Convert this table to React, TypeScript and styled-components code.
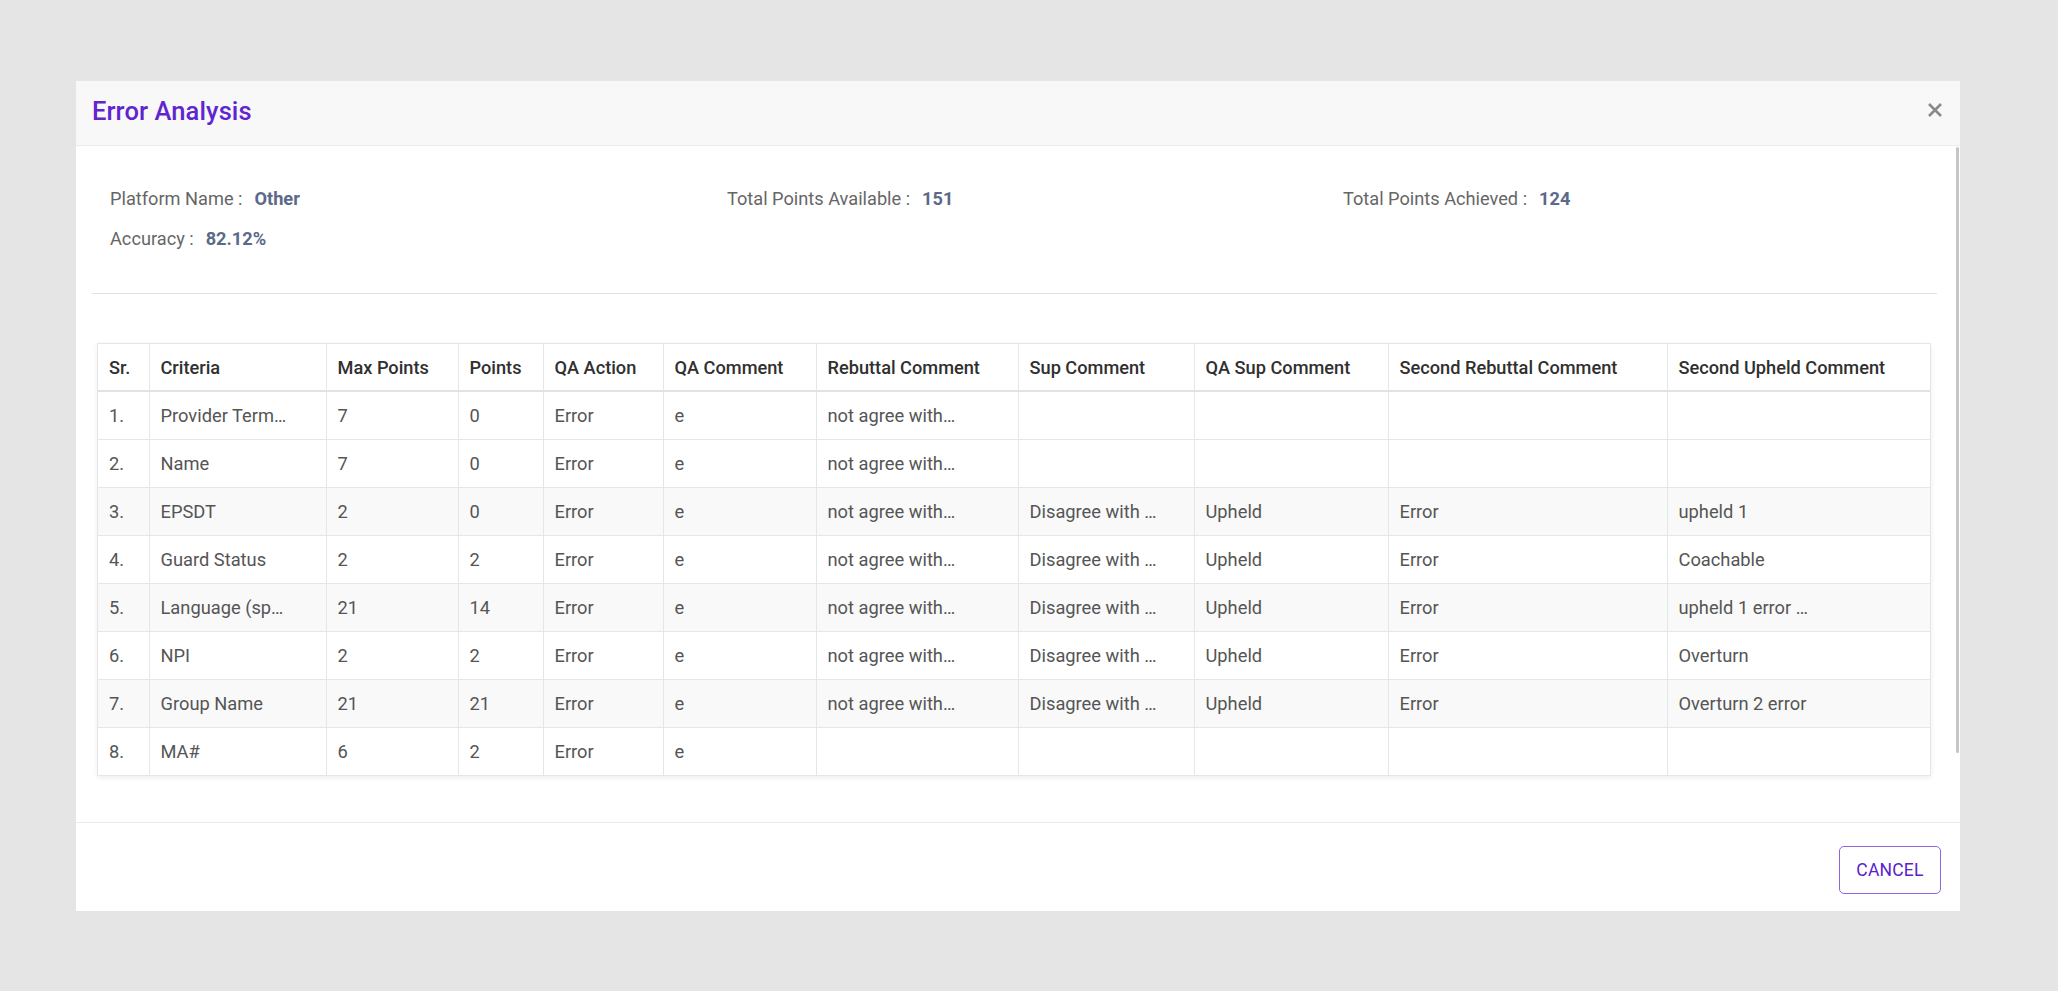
import React from "react";
import styled, { createGlobalStyle } from "styled-components";

const GlobalStyle = createGlobalStyle`
  html, body {
    margin: 0;
    padding: 0;
    background: #e5e5e5;
    font-family: Roboto, "Noto Sans", Arial, sans-serif;
  }
  * { box-sizing: border-box; }
`;

const Backdrop = styled.div`
  min-height: 991px;
  padding: 81px 0 0 76px;
  background: #e5e5e5;
`;

const Modal = styled.div`
  position: relative;
  width: 1884px;
  height: 830px;
  background: #ffffff;
  display: flex;
  flex-direction: column;
`;

const Header = styled.div`
  height: 65px;
  flex: none;
  display: flex;
  align-items: center;
  justify-content: space-between;
  padding: 0 16px 4px 16px;
  background: #f8f8f8;
  border-bottom: 1px solid #ececec;
`;

const Title = styled.h2`
  margin: 0;
  font-size: 25.5px;
  font-weight: 500;
  color: #6125cf;
  letter-spacing: 0.1px;
`;

const CloseButton = styled.button`
  width: 18px;
  height: 18px;
  padding: 0;
  border: none;
  background: transparent;
  display: flex;
  align-items: center;
  justify-content: center;
  cursor: pointer;
  margin-top: -3px;
`;

const Body = styled.div`
  flex: 1;
  padding: 41px 23px 0 16px;
  display: flex;
  flex-direction: column;
`;

const InfoGrid = styled.div`
  display: grid;
  grid-template-columns: 617px 616px 1fr;
  row-gap: 16px;
  padding-left: 18px;
`;

const InfoItem = styled.div`
  font-size: 18.2px;
  line-height: 24px;
  color: #666666;
  white-space: nowrap;
`;

const InfoValue = styled.span`
  font-weight: 700;
  color: #5b6a88;
  margin-left: 12px;
`;

const Divider = styled.hr`
  margin: 42px 0 0;
  border: none;
  border-top: 1px solid #e2e2e2;
`;

const TableCard = styled.div`
  margin: 49px 6px 0 5px;
  border: 1px solid #e6e6e6;
  box-shadow: 0 2px 5px rgba(0, 0, 0, 0.07);
`;

const Table = styled.table`
  width: 1832px;
  border-collapse: collapse;
  table-layout: fixed;
`;

const HeadCell = styled.th`
  height: 47px;
  padding: 0 10px 0 11px;
  text-align: left;
  font-size: 18.2px;
  font-weight: 500;
  color: #303030;
  border-left: 1px solid #e6e6e6;
  border-bottom: 2px solid #e2e2e2;
  white-space: nowrap;
  overflow: hidden;
  &:first-child { border-left: none; }
`;

const Row = styled.tr<{ $shaded: boolean }>`
  background: ${(p) => (p.$shaded ? "#f9f9f9" : "#ffffff")};
`;

const Cell = styled.td`
  height: 48px;
  padding: 0 10px 0 11px;
  font-size: 18.3px;
  font-weight: 400;
  color: #555555;
  border-left: 1px solid #e6e6e6;
  border-top: 1px solid #e6e6e6;
  white-space: nowrap;
  overflow: hidden;
  &:first-child { border-left: none; }
`;

const Footer = styled.div`
  height: 89px;
  flex: none;
  border-top: 1px solid #ebebeb;
  display: flex;
  align-items: center;
  justify-content: flex-end;
  padding: 6px 19px 0 0;
`;

const OutlineButton = styled.button`
  width: 102px;
  height: 48px;
  border: 1.5px solid #8d66e3;
  border-radius: 5px;
  background: #ffffff;
  color: #5b22c9;
  font-family: Roboto, "Noto Sans", Arial, sans-serif;
  font-size: 17.5px;
  font-weight: 400;
  letter-spacing: 0.2px;
  cursor: pointer;
`;

const ScrollThumb = styled.div`
  position: absolute;
  top: 66px;
  right: 1px;
  width: 3px;
  height: 606px;
  background: #c6c6c6;
  border-radius: 2px;
`;

const columns = [
  { label: "Sr.", width: 51 },
  { label: "Criteria", width: 177 },
  { label: "Max Points", width: 132 },
  { label: "Points", width: 85 },
  { label: "QA Action", width: 120 },
  { label: "QA Comment", width: 153 },
  { label: "Rebuttal Comment", width: 202 },
  { label: "Sup Comment", width: 176 },
  { label: "QA Sup Comment", width: 194 },
  { label: "Second Rebuttal Comment", width: 279 },
  { label: "Second Upheld Comment", width: 263 },
];

const rows: string[][] = [
  ["1.", "Provider Term…", "7", "0", "Error", "e", "not agree with…", "", "", "", ""],
  ["2.", "Name", "7", "0", "Error", "e", "not agree with…", "", "", "", ""],
  ["3.", "EPSDT", "2", "0", "Error", "e", "not agree with…", "Disagree with …", "Upheld", "Error", "upheld 1"],
  ["4.", "Guard Status", "2", "2", "Error", "e", "not agree with…", "Disagree with …", "Upheld", "Error", "Coachable"],
  ["5.", "Language (sp…", "21", "14", "Error", "e", "not agree with…", "Disagree with …", "Upheld", "Error", "upheld 1 error …"],
  ["6.", "NPI", "2", "2", "Error", "e", "not agree with…", "Disagree with …", "Upheld", "Error", "Overturn"],
  ["7.", "Group Name", "21", "21", "Error", "e", "not agree with…", "Disagree with …", "Upheld", "Error", "Overturn 2 error"],
  ["8.", "MA#", "6", "2", "Error", "e", "", "", "", "", ""],
];

const CloseIcon = () => (
  <svg width="16" height="16" viewBox="0 0 16 16" aria-hidden="true">
    <path d="M2 2 L14 14 M14 2 L2 14" stroke="#8a8a8a" strokeWidth="2.6" strokeLinecap="butt" />
  </svg>
);

export default function App() {
  return (
    <>
      <GlobalStyle />
      <Backdrop>
        <Modal>
          <Header>
            <Title>Error Analysis</Title>
            <CloseButton aria-label="close">
              <CloseIcon />
            </CloseButton>
          </Header>
          <Body>
            <InfoGrid>
              <InfoItem>
                Platform Name :<InfoValue>Other</InfoValue>
              </InfoItem>
              <InfoItem>
                Total Points Available :<InfoValue>151</InfoValue>
              </InfoItem>
              <InfoItem>
                Total Points Achieved :<InfoValue>124</InfoValue>
              </InfoItem>
              <InfoItem>
                Accuracy :<InfoValue>82.12%</InfoValue>
              </InfoItem>
            </InfoGrid>
            <Divider />
            <TableCard>
              <Table>
                <colgroup>
                  {columns.map((c) => (
                    <col key={c.label} style={{ width: c.width }} />
                  ))}
                </colgroup>
                <thead>
                  <tr>
                    {columns.map((c) => (
                      <HeadCell key={c.label}>{c.label}</HeadCell>
                    ))}
                  </tr>
                </thead>
                <tbody>
                  {rows.map((r, i) => (
                    <Row key={i} $shaded={i === 2 || i === 4 || i === 6}>
                      {r.map((v, j) => (
                        <Cell key={j}>{v}</Cell>
                      ))}
                    </Row>
                  ))}
                </tbody>
              </Table>
            </TableCard>
          </Body>
          <Footer>
            <OutlineButton>CANCEL</OutlineButton>
          </Footer>
          <ScrollThumb />
        </Modal>
      </Backdrop>
    </>
  );
}
